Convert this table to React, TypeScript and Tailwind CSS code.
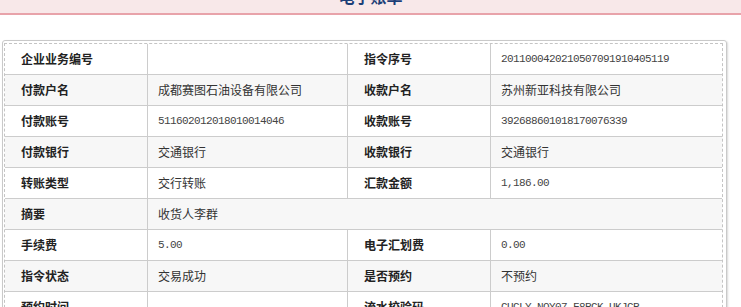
import React from "react";

type Cell = {
  label: string;
  value: string;
  mono?: boolean;
};

type Row = {
  left: Cell;
  right?: Cell;
};

const rows: Row[] = [
  {
    left: { label: "企业业务编号", value: "" },
    right: { label: "指令序号", value: "2011000420210507091910405119", mono: true },
  },
  {
    left: { label: "付款户名", value: "成都赛图石油设备有限公司" },
    right: { label: "收款户名", value: "苏州新亚科技有限公司" },
  },
  {
    left: { label: "付款账号", value: "511602012018010014046", mono: true },
    right: { label: "收款账号", value: "392688601018170076339", mono: true },
  },
  {
    left: { label: "付款银行", value: "交通银行" },
    right: { label: "收款银行", value: "交通银行" },
  },
  {
    left: { label: "转账类型", value: "交行转账" },
    right: { label: "汇款金额", value: "1,186.00", mono: true },
  },
  {
    left: { label: "摘要", value: "收货人李群" },
  },
  {
    left: { label: "手续费", value: "5.00", mono: true },
    right: { label: "电子汇划费", value: "0.00", mono: true },
  },
  {
    left: { label: "指令状态", value: "交易成功" },
    right: { label: "是否预约", value: "不预约" },
  },
  {
    left: { label: "预约时间", value: "" },
    right: { label: "流水校验码", value: "CUCLY-NOY07-F8PCK-UKJCP", mono: true },
  },
];

const cjk = "font-['Noto_Sans_CJK_SC','Noto_Sans',sans-serif]";
const mono = "font-['Liberation_Mono','Noto_Sans_CJK_SC',monospace]";

const Label = ({ text, width }: { text: string; width: string }) => (
  <div
    className={`${width} shrink-0 flex items-center pl-4 border-r border-[#cccccc] text-[12px] font-bold text-[#222222] ${cjk}`}
  >
    {text}
  </div>
);

const Value = ({ cell, width, last }: { cell: Cell; width: string; last?: boolean }) => (
  <div
    className={`${width} flex items-center pl-[10px] ${last ? "" : "border-r border-[#cccccc]"} ${
      cell.mono
        ? `${mono} text-[11px] tracking-[-0.6px] text-[#444444]`
        : `${cjk} text-[12px] text-[#333333]`
    }`}
  >
    {cell.value}
  </div>
);

export default function App() {
  return (
    <div className="w-[741px] h-[307px] overflow-hidden bg-white">
      <div className="h-[15px] bg-[#f8e8e9] border-b-2 border-[#e8a3aa] overflow-hidden flex justify-center">
        <h1 className={`-mt-[12px] text-[16px] leading-[16px] font-bold text-[#1d3f78] ${cjk}`}>
          电子账单
        </h1>
      </div>

      <div className="ml-[2px] mt-[25px] w-[725px] border border-[#c9c9c9] rounded-[3px] shadow-[1px_1px_2px_rgba(0,0,0,0.15)] pl-[1px] pt-[2px] pr-[3px]">
        <div className="border border-dashed border-[#c4c4c4] border-b-0">
          {rows.map((row, i) => (
            <div
              key={i}
              className={`flex h-[31px] border-b border-[#cccccc] ${
                i % 2 === 1 ? "bg-[#f7f7f7]" : "bg-white"
              }`}
            >
              <Label text={row.left.label} width="w-[143px]" />
              {row.right ? (
                <>
                  <Value cell={row.left} width="w-[200px] shrink-0" />
                  <Label text={row.right.label} width="w-[143px]" />
                  <Value cell={row.right} width="flex-1" last />
                </>
              ) : (
                <Value cell={row.left} width="flex-1" last />
              )}
            </div>
          ))}
        </div>
      </div>
    </div>
  );
}
